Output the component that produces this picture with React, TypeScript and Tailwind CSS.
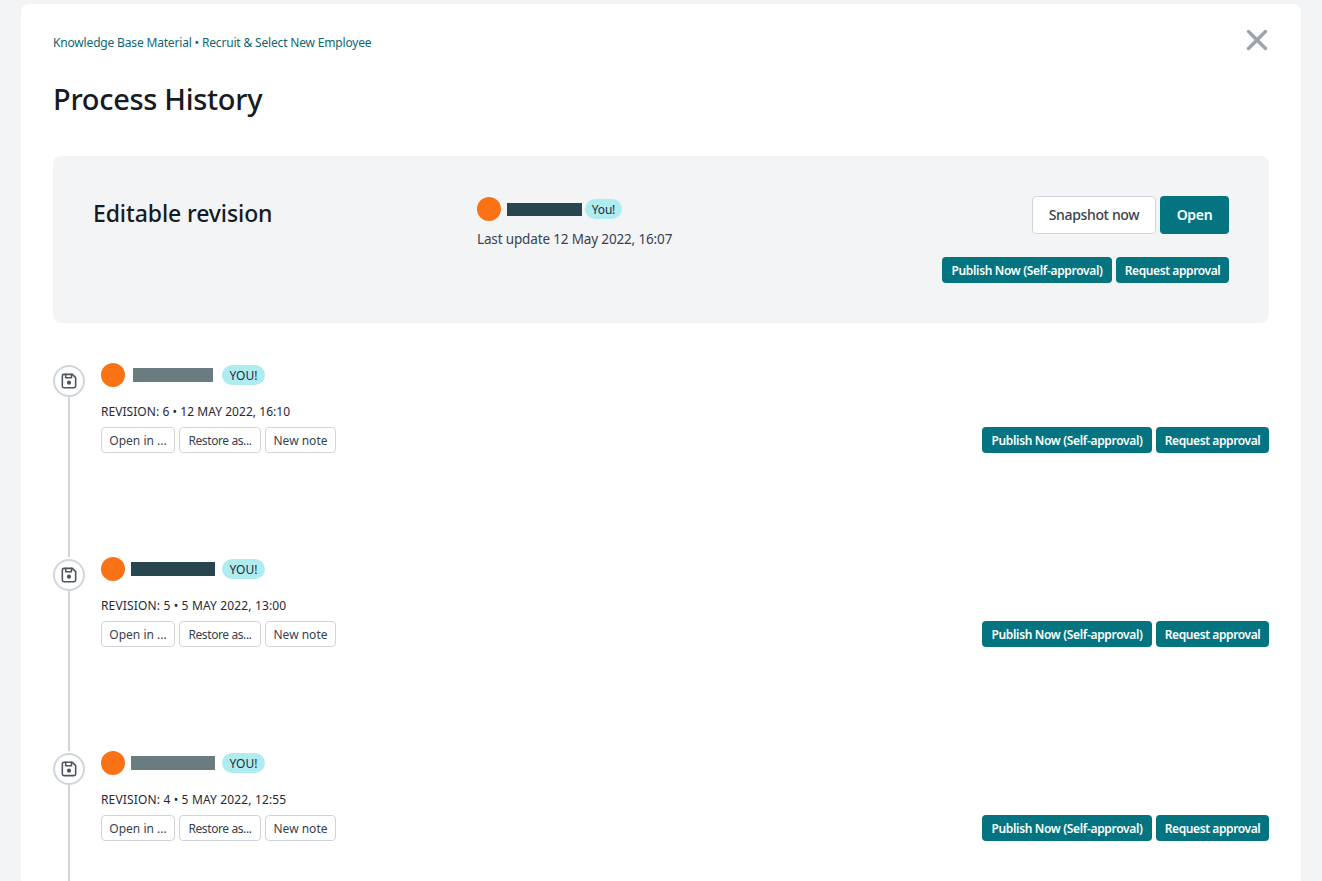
import { X } from "lucide-react";

const font = { fontFamily: '"Noto Sans", sans-serif' };

const revisions = [
  { id: 6, date: "12 MAY 2022, 16:10", barWidth: "w-[80px]", barMargin: "ml-2", barColor: "bg-[#6b7c80]", gap: "ml-[9px]", tracking: "tracking-[0.05px]" },
  { id: 5, date: "5 MAY 2022, 13:00", barWidth: "w-[84px]", barMargin: "ml-1.5", barColor: "bg-[#27464f]", gap: "ml-[7px]", tracking: "tracking-[0.15px]" },
  { id: 4, date: "5 MAY 2022, 12:55", barWidth: "w-[84px]", barMargin: "ml-1.5", barColor: "bg-[#6b7c80]", gap: "ml-[7px]", tracking: "tracking-[0.15px]" },
];

const FloppyIcon = () => (
  <svg width="20" height="20" viewBox="0 0 24 24" fill="none" stroke="#4b5563" strokeWidth="1.9" strokeLinecap="round" strokeLinejoin="round">
    <path d="M6 4h10l4 4v10a2 2 0 0 1-2 2H6a2 2 0 0 1-2-2V6a2 2 0 0 1 2-2" />
    <circle cx="12" cy="14" r="1.6" fill="#4b5563" />
    <path d="M15 4v4H8V4" />
  </svg>
);

const PublishButtons = () => (
  <div className="flex gap-1">
    <button className="h-[26px] w-[170px] rounded bg-[#047481] pt-px text-[12px] font-semibold tracking-[-0.33px] text-white whitespace-nowrap">
      Publish Now (Self-approval)
    </button>
    <button className="h-[26px] w-[113px] rounded bg-[#047481] pt-px text-[12px] font-semibold tracking-[-0.4px] text-white whitespace-nowrap">
      Request approval
    </button>
  </div>
);

const SmallButton = ({ label, width, tracking }: { label: string; width: string; tracking: string }) => (
  <button className={`h-[26px] ${width} ${tracking} rounded border border-[#d1d5db] bg-white pt-px text-[12px] text-[#374151] whitespace-nowrap`}>
    {label}
  </button>
);

const RevisionRow = ({ id, date, barWidth, barMargin, barColor, gap, tracking }: (typeof revisions)[number]) => (
  <div className="flex h-[194px]">
    <div className="flex w-8 flex-col items-center pt-0.5">
      <div className="flex size-8 shrink-0 items-center justify-center rounded-full border-2 border-[#d1d5db] bg-white">
        <FloppyIcon />
      </div>
      <div className="w-0.5 flex-1 bg-[#d1d5db]" />
    </div>
    <div className="ml-4 flex-1">
      <div className="flex h-6 items-center">
        <div className="size-6 rounded-full bg-[#f97316]" />
        <div className={`${barMargin} h-[14px] ${barWidth} ${barColor}`} />
        <span className={`${gap} flex h-5 w-[43px] items-center justify-center rounded-[10px] bg-[#afecef] pt-px text-[12px] text-[#1f2937]`}>
          YOU!
        </span>
      </div>
      <div className={`mt-[17px] text-[12px] leading-4 ${tracking} text-[#1f2937]`}>
        REVISION: {id} • {date}
      </div>
      <div className="mt-[7px] flex items-start justify-between">
        <div className="flex gap-1">
          <SmallButton label="Open in ..." width="w-[74px]" tracking="tracking-normal" />
          <SmallButton label="Restore as..." width="w-[82px]" tracking="tracking-[-0.4px]" />
          <SmallButton label="New note" width="w-[71px]" tracking="tracking-normal" />
        </div>
        <PublishButtons />
      </div>
    </div>
  </div>
);

export default function App() {
  return (
    <div className="h-[881px] overflow-hidden bg-[#f3f4f6] px-[21px] pt-1" style={font}>
      <div className="rounded-lg bg-white px-8 pt-8">
        <div className="flex h-[14px] items-start justify-between">
          <div className="text-[12px] leading-[14px] tracking-[-0.17px] text-[#0f666f]">
            Knowledge Base Material • Recruit &amp; Select New Employee
          </div>
          <X className="-mt-[13px] -mr-[5px] text-[#9ca3af]" size={34} strokeWidth={2.4} />
        </div>
        <h1 className="mt-[31px] text-[29px] font-medium leading-9 tracking-[-0.3px] text-[#161a22]">Process History</h1>

        <div className="mt-[39px] flex h-[167px] rounded-lg bg-[#f3f4f6] px-10 pt-10">
          <div className="-mt-px w-[384px] text-[23px] font-medium leading-9 tracking-[-0.1px] text-[#161a22]">Editable revision</div>
          <div>
            <div className="mt-px flex h-6 items-center">
              <div className="size-6 rounded-full bg-[#f97316]" />
              <div className="ml-1.5 h-[13px] w-[75px] bg-[#27464f]" />
              <span className="ml-[3px] flex h-5 w-[37px] items-center justify-center rounded-[10px] bg-[#afecef] pt-px text-[12px] tracking-[-0.2px] text-[#1f2937]">
                You!
              </span>
            </div>
            <div className="mt-2 text-[13.5px] leading-5 tracking-[-0.15px] text-[#374151]">Last update 12 May 2022, 16:07</div>
          </div>
          <div className="ml-auto flex flex-col items-end">
            <div className="flex gap-1">
              <button className="h-[38px] w-[124px] rounded border border-[#d1d5db] bg-white pb-0.5 text-[14px] font-medium tracking-[-0.35px] text-[#374151]">
                Snapshot now
              </button>
              <button className="h-[38px] w-[69px] rounded bg-[#047481] pb-0.5 text-[14px] font-semibold tracking-[-0.3px] text-white">Open</button>
            </div>
            <div className="mt-[23px]">
              <PublishButtons />
            </div>
          </div>
        </div>

        <div className="mt-10">
          {revisions.map((r) => (
            <RevisionRow key={r.id} {...r} />
          ))}
        </div>
      </div>
    </div>
  );
}
